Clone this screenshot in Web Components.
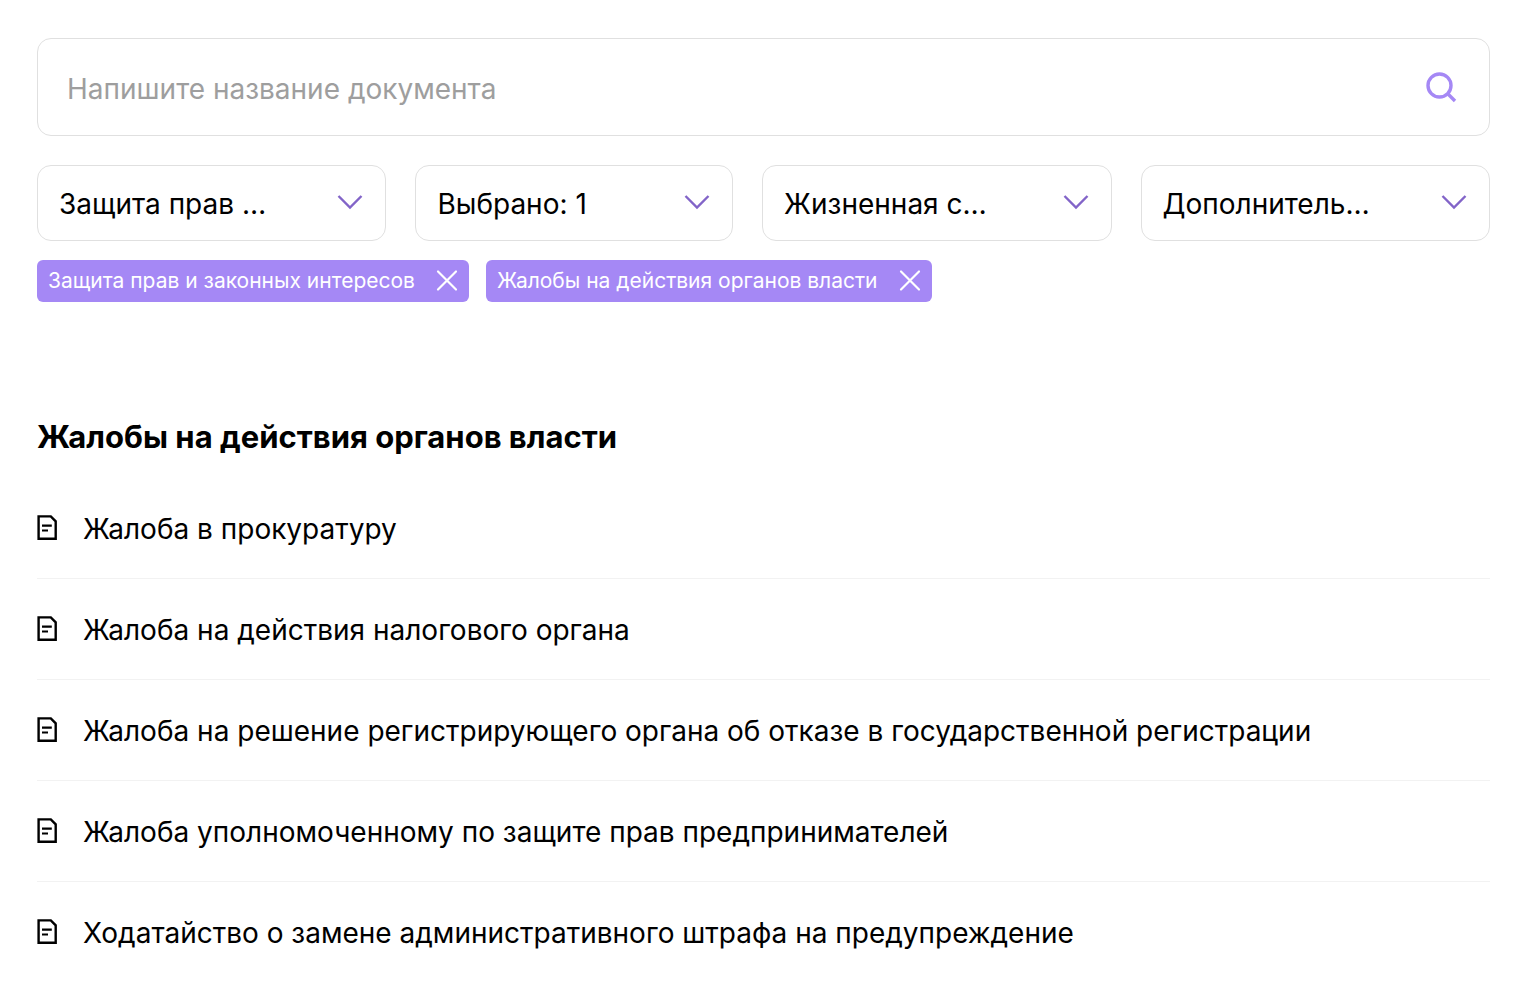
<!DOCTYPE html>
<html lang="ru">
<head>
<meta charset="utf-8">
<meta name="viewport" content="width=device-width, initial-scale=1">
<title>Документы</title>
<style>
  body { margin: 0; background: #fff; color: #000; font-family: Inter, "Noto Sans", sans-serif; }
</style>
</head>
<body>
<doc-page>
  <doc-search slot="search" placeholder="Напишите название документа"></doc-search>
  <doc-filter slot="filters" label="Категория" value="Защита прав …"></doc-filter>
  <doc-filter slot="filters" label="Подкатегория" value="Выбрано: 1"></doc-filter>
  <doc-filter slot="filters" label="Жизненная ситуация" value="Жизненная с…"></doc-filter>
  <doc-filter slot="filters" label="Дополнительно" value="Дополнитель…"></doc-filter>
  <doc-tag slot="tags">Защита прав и законных интересов</doc-tag>
  <doc-tag slot="tags">Жалобы на действия органов власти</doc-tag>
  <span slot="heading">Жалобы на действия органов власти</span>
  <doc-item>Жалоба в прокуратуру</doc-item>
  <doc-item>Жалоба на действия налогового органа</doc-item>
  <doc-item>Жалоба на решение регистрирующего органа об отказе в государственной регистрации</doc-item>
  <doc-item>Жалоба уполномоченному по защите прав предпринимателей</doc-item>
  <doc-item>Ходатайство о замене административного штрафа на предупреждение</doc-item>
</doc-page>

<script>
  const define = (name, html, setup) => customElements.define(name, class extends HTMLElement {
    constructor() {
      super();
      this.attachShadow({ mode: 'open' }).innerHTML = html;
    }
    connectedCallback() {
      if (setup) setup(this, this.shadowRoot);
    }
  });

  define('doc-page', `
    <style>
      :host { display: block; padding: 38px 30px 10px 37px; }
      .filters { display: grid; grid-template-columns: 11fr 10fr 11fr 11fr; gap: 29px; margin-top: 29px; }
      .tags { display: flex; flex-wrap: wrap; gap: 17px; margin-top: 19px; }
      h2 { margin: 115px 0 21px; font-size: 31px; line-height: 40px; font-weight: 700; }
      .list { display: block; }
    </style>
    <main>
      <slot name="search"></slot>
      <div class="filters"><slot name="filters"></slot></div>
      <div class="tags"><slot name="tags"></slot></div>
      <h2><slot name="heading"></slot></h2>
      <div class="list" role="list"><slot></slot></div>
    </main>`);

  define('doc-search', `
    <style>
      :host { display: block; }
      form { display: flex; align-items: center; box-sizing: border-box; height: 98px; padding: 0 30px 0 29px;
        border: 1px solid #e0e0e0; border-radius: 14px; }
      input { flex: 1; min-width: 0; border: 0; padding: 4px 0 0; outline: 0; background: none; color: #000;
        font: inherit; font-size: 28px; line-height: 40px; }
      input::placeholder { color: #9e9e9e; opacity: 1; }
      button { display: flex; border: 0; padding: 0; background: none; cursor: pointer; }
    </style>
    <form role="search">
      <input type="text">
      <button type="button" aria-label="Найти">
        <svg width="36" height="36" viewBox="0 0 36 36" fill="none" stroke="#a588f5" stroke-width="3.4">
          <circle cx="16.500" cy="16.500" r="11.500"/><path d="M24.500 24.500L32 32"/>
        </svg>
      </button>
    </form>`, (el, root) => {
      const input = root.querySelector('input');
      input.placeholder = el.getAttribute('placeholder');
      input.setAttribute('aria-label', input.placeholder);
    });

  define('doc-filter', `
    <style>
      :host { display: block; min-width: 0; }
      label { display: grid; align-items: center; }
      select, svg { grid-area: 1 / 1; }
      select { appearance: none; box-sizing: border-box; width: 100%; height: 76px; margin: 0; padding: 2px 80px 0 21px;
        border: 1px solid #e0e0e0; border-radius: 14px; background: #fff; color: #000;
        font: inherit; font-size: 28px; line-height: 40px; text-overflow: ellipsis; cursor: pointer; }
      svg { justify-self: end; margin-right: 22px; pointer-events: none; }
    </style>
    <label>
      <select><option></option></select>
      <svg width="28" height="20" viewBox="0 0 28 20" fill="none" stroke="#8264c8" stroke-width="2.4"><path d="M2.500 3L14 14.500L25.500 3"/></svg>
    </label>`, (el, root) => {
      root.querySelector('option').textContent = el.getAttribute('value');
      root.querySelector('select').setAttribute('aria-label', el.getAttribute('label'));
    });

  define('doc-tag', `
    <style>
      :host { display: flex; align-items: center; gap: 20px; height: 42px; padding: 0 10px 0 11px;
        border-radius: 6px; background: #a588f5; color: #fff; font-size: 21px; line-height: 30px; }
      button { display: flex; border: 0; padding: 0; background: none; cursor: pointer; }
    </style>
    <span><slot></slot></span>
    <button type="button" aria-label="Удалить">
      <svg width="24" height="24" viewBox="0 0 24 24" fill="none" stroke="#fff" stroke-width="2.2" stroke-linecap="round"><path d="M3 2.500L21 20.500M21 2.500L3 20.500"/></svg>
    </button>`);

  define('doc-item', `
    <style>
      :host { display: block; border-bottom: 1px solid #f2f2f2; }
      :host(:last-of-type) { border-bottom: 0; }
      a { display: flex; align-items: center; gap: 26px; min-height: 100px; color: inherit; text-decoration: none;
        font-size: 28px; line-height: 40px; }
      svg { flex: none; }
      span { padding-top: 2px; }
    </style>
    <a href="#">
      <svg width="20" height="28" viewBox="0 0 20 28" fill="none" stroke="#000" stroke-width="2.4">
        <path d="M1.600 2.400H13.800L18.700 7.300V24.700H1.600Z"/><path d="M5 11.600H14.800M5 16.500H11" stroke-width="2.200"/>
      </svg>
      <span><slot></slot></span>
    </a>`, el => el.setAttribute('role', 'listitem'));
</script>
</body>
</html>
